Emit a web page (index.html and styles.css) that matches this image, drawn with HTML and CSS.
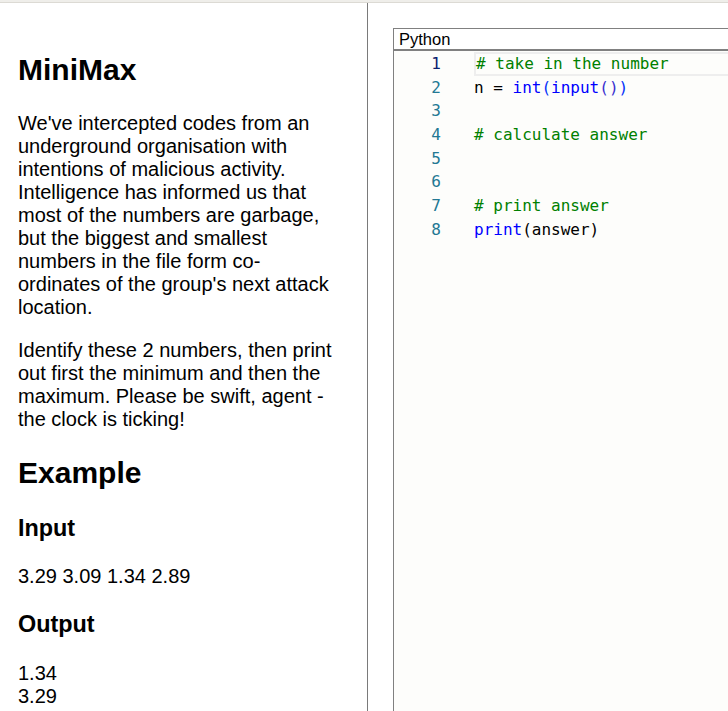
FILE: index.html
```
<!DOCTYPE html>
<html>
<head>
<meta charset="utf-8">
<link rel="stylesheet" href="styles.css">
</head>
<body>
<div class="topbar"></div>
<div class="main">
  <div class="problem">
    <h2 class="title">MiniMax</h2>
    <p>We've intercepted codes from an underground organisation with intentions of malicious activity. Intelligence has informed us that most of the numbers are garbage, but the biggest and smallest numbers in the file form co-ordinates of the group's next attack location.</p>
    <p>Identify these 2 numbers, then print out first the minimum and then the maximum. Please be swift, agent - the clock is ticking!</p>
    <h2>Example</h2>
    <h3>Input</h3>
    <p>3.29 3.09 1.34 2.89</p>
    <h3>Output</h3>
    <p>1.34<br>3.29</p>
  </div>
  <div class="workspace">
    <div class="editor">
      <div class="lang">Python</div>
      <div class="code">
        <div class="line current"><span class="ln">1</span><span class="src"><span class="cm"># take in the number</span></span></div>
        <div class="line"><span class="ln">2</span><span class="src">n = <span class="kw">int</span><span class="br">(</span><span class="kw">input</span><span class="br2">()</span><span class="br">)</span></span></div>
        <div class="line"><span class="ln">3</span><span class="src"></span></div>
        <div class="line"><span class="ln">4</span><span class="src"><span class="cm"># calculate answer</span></span></div>
        <div class="line"><span class="ln">5</span><span class="src"></span></div>
        <div class="line"><span class="ln">6</span><span class="src"></span></div>
        <div class="line"><span class="ln">7</span><span class="src"><span class="cm"># print answer</span></span></div>
        <div class="line"><span class="ln">8</span><span class="src"><span class="kw">print</span>(answer)</span></div>
      </div>
    </div>
  </div>
</div>
</body>
</html>
```
FILE: styles.css
```
html, body {
  margin: 0;
  padding: 0;
  background: #ffffff;
}
body {
  font-family: "Liberation Sans", Arial, sans-serif;
  color: #000000;
  overflow: hidden;
  height: 711px;
}
.topbar {
  height: 2px;
  background: #efeeea;
  border-bottom: 1px solid #dcdad4;
}
.main {
  display: flex;
  height: 708px;
  overflow: hidden;
}
.problem {
  box-sizing: border-box;
  width: 368px;
  flex: none;
  padding: 25px 27px 0 18px;
  border-right: 1px solid #7a7a7a;
  font-size: 20px;
  overflow: hidden;
}
.problem h2 {
  font-size: 1.5em;
  margin: 0.83em 0;
}
.problem h3 {
  font-size: 1.17em;
  margin: 1em 0;
}
.problem p {
  margin: 1em 0;
}
.workspace {
  flex: 1;
  padding: 25px 0 0 25px;
  overflow: hidden;
}
.editor {
  width: 420px;
  height: 100%;
  border-top: 1px solid #808080;
  border-left: 1px solid #808080;
  display: flex;
  flex-direction: column;
}
.lang {
  height: 20px;
  line-height: 20px;
  font-size: 16.5px;
  padding-left: 5px;
  border-bottom: 2px solid #808080;
  background: #ffffff;
}
.code {
  flex: 1;
  background: #fdfdfb;
  font-family: "DejaVu Sans Mono", monospace;
  font-size: 16px;
  padding-top: 1px;
}
.line {
  display: flex;
  height: 23.7px;
  line-height: 23.7px;
}
.ln {
  width: 47px;
  padding-right: 33px;
  text-align: right;
  color: #237893;
  flex: none;
}
.src {
  flex: 1;
  white-space: pre;
  color: #000000;
}
.current .ln {
  color: #0b216f;
}
.current .src {
  box-sizing: border-box;
  border: 2px solid #eeeeee;
  border-right: none;
  line-height: 19.7px;
}
.cm { color: #008000; }
.kw { color: #0000ff; }
.br { color: #0431fa; }
.br2 { color: #3a2fd0; }
```
